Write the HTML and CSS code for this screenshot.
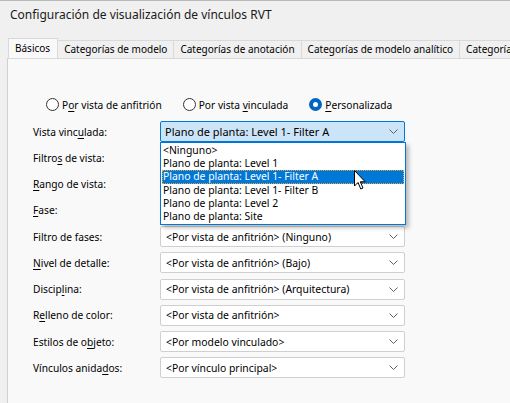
FILE: index.html
```html
<!DOCTYPE html>
<html lang="es">
<head>
<meta charset="utf-8">
<link rel="stylesheet" href="styles.css">
</head>
<body>
<div class="window">
  <div class="topline"></div>
  <div class="titlebar">Configuración de visualización de vínculos RVT</div>
  <div class="tabs">
    <div class="tab active">Básicos</div>
    <div class="tab">Categorías de modelo</div>
    <div class="tab">Categorías de anotación</div>
    <div class="tab">Categorías de modelo analítico</div>
    <div class="tab">Categorías importadas</div>
  </div>
  <div class="panel">
    <div class="radios">
      <label class="radio"><span class="circle"></span><span>P<u>o</u>r vista de anfitrión</span></label>
      <label class="radio"><span class="circle"></span><span>Por vista <u>v</u>inculada</span></label>
      <label class="radio"><span class="circle checked"></span><span><u>P</u>ersonalizada</span></label>
    </div>
    <div class="form">
      <div class="label">Vista vinc<u>u</u>lada:</div>
      <div class="combo focused"><span>Plano de planta: Level 1- Filter A</span><svg class="chev" width="9" height="5" viewBox="0 0 9 5"><path d="M0.5 0.5 L4.5 4.5 L8.5 0.5" fill="none" stroke="#606060" stroke-width="1"/></svg>
        <ul class="list">
          <li>&lt;Ninguno&gt;</li>
          <li>Plano de planta: Level 1</li>
          <li class="sel">Plano de planta: Level 1- Filter A</li>
          <li>Plano de planta: Level 1- Filter B</li>
          <li>Plano de planta: Level 2</li>
          <li>Plano de planta: Site</li>
        </ul>
        <svg class="cursor" width="14" height="21" viewBox="0 0 14 21"><path d="M0.5 0.5 L0.5 16 L4 12.5 L6.8 19 L9 18 L6.3 11.8 L11.2 11.8 Z" fill="#ffffff" stroke="#000" stroke-width="1" stroke-linejoin="round"/></svg>
      </div>

      <div class="label">Filtro<u>s</u> de vista:</div>
      <div class="empty"></div>
      <div class="label"><u>R</u>ango de vista:</div>
      <div class="empty"></div>
      <div class="label"><u>F</u>ase:</div>
      <div class="empty"></div>

      <div class="label">Filtro de fases:</div>
      <div class="combo"><span>&lt;Por vista de anfitrión&gt; (Ninguno)</span><svg class="chev" width="9" height="5" viewBox="0 0 9 5"><path d="M0.5 0.5 L4.5 4.5 L8.5 0.5" fill="none" stroke="#606060" stroke-width="1"/></svg></div>
      <div class="label"><u>N</u>ivel de detalle:</div>
      <div class="combo"><span>&lt;Por vista de anfitrión&gt; (Bajo)</span><svg class="chev" width="9" height="5" viewBox="0 0 9 5"><path d="M0.5 0.5 L4.5 4.5 L8.5 0.5" fill="none" stroke="#606060" stroke-width="1"/></svg></div>
      <div class="label">Discip<u>l</u>ina:</div>
      <div class="combo"><span>&lt;Por vista de anfitrión&gt; (Arquitectura)</span><svg class="chev" width="9" height="5" viewBox="0 0 9 5"><path d="M0.5 0.5 L4.5 4.5 L8.5 0.5" fill="none" stroke="#606060" stroke-width="1"/></svg></div>
      <div class="label">R<u>e</u>lleno de color:</div>
      <div class="combo"><span>&lt;Por vista de anfitrión&gt;</span><svg class="chev" width="9" height="5" viewBox="0 0 9 5"><path d="M0.5 0.5 L4.5 4.5 L8.5 0.5" fill="none" stroke="#606060" stroke-width="1"/></svg></div>
      <div class="label">Estilos de o<u>b</u>jeto:</div>
      <div class="combo"><span>&lt;Por modelo vinculado&gt;</span><svg class="chev" width="9" height="5" viewBox="0 0 9 5"><path d="M0.5 0.5 L4.5 4.5 L8.5 0.5" fill="none" stroke="#606060" stroke-width="1"/></svg></div>
      <div class="label">Vínculos anida<u>d</u>os:</div>
      <div class="combo"><span>&lt;Por vínculo principal&gt;</span><svg class="chev" width="9" height="5" viewBox="0 0 9 5"><path d="M0.5 0.5 L4.5 4.5 L8.5 0.5" fill="none" stroke="#606060" stroke-width="1"/></svg></div>
    </div>
  </div>
</div>
</body>
</html>
```
FILE: styles.css
```css
* { box-sizing: border-box; }
html, body { margin: 0; padding: 0; }
body {
  width: 510px;
  height: 403px;
  overflow: hidden;
  background: #f0f0f0;
  font-family: "Noto Sans", "Open Sans", sans-serif;
  font-size: 10.2px;
  color: #000;
}
.window { position: relative; width: 510px; height: 403px; display: flex; flex-direction: column; overflow: hidden; }
.topline { height: 1px; background: #b9b9b9; }
.titlebar {
  height: 31px;
  padding-left: 10px;
  padding-top: 5px;
  font-size: 12px;
  color: #1a1a1a;
  white-space: nowrap;
}
.tabs {
  display: flex;
  align-items: flex-end;
  height: 26px;
  padding-left: 8px;
  white-space: nowrap;
  overflow: hidden;
}
.tab {
  height: 18px;
  padding: 0 6px;
  line-height: 16px;
  font-size: 10px;
  background: #f0f0f0;
  border: 1px solid #d9d9d9;
  border-bottom: none;
  border-left: none;
  flex-shrink: 0;
}
.tab.active {
  height: 21px;
  line-height: 19px;
  background: #f9f9f9;
  border-left: 1px solid #d9d9d9;
  padding: 0 7px 0 6px;
  margin-bottom: -1px;
  position: relative;
  z-index: 1;
}
.panel {
  flex: 1;
  margin-left: 7px;
  background: #f9f9f9;
  border-left: 1px solid #d0d0d0;
  border-top: 1px solid #d9d9d9;
  padding: 38px 0 0 25px;
}
.radios {
  display: flex;
  gap: 21px;
  padding-left: 13px;
  height: 15px;
  align-items: center;
}
.radio { display: flex; align-items: center; gap: 3px; }
.circle {
  width: 13px; height: 13px;
  border-radius: 50%;
  border: 1px solid #333;
  background: #fff;
}
.circle.checked {
  border: 4px solid #0067c0;
  background: #fff;
}
.form {
  margin-top: 9px;
  display: grid;
  grid-template-columns: 127px 245px;
  grid-auto-rows: 21px;
  row-gap: 5.25px;
  align-items: center;
}
.combo {
  position: relative;
  height: 21px;
  border: 1px solid #cfcfcf;
  border-radius: 2px;
  background: #fff;
  display: flex;
  align-items: center;
  justify-content: space-between;
  padding: 0 6px 0 5px;
  white-space: nowrap;
  font-size: 10.4px;
}
.combo.focused {
  background: #cce4f7;
  border-color: #0078d7;
  padding-left: 4px;
  font-size: 11px;
}
.chev { flex-shrink: 0; }
.list {
  position: absolute;
  left: -1px;
  top: 20px;
  width: 246px;
  margin: 0;
  padding: 1px 1px;
  list-style: none;
  background: #fff;
  border: 1px solid #0078d7;
  box-shadow: 3px 3px 4px rgba(0,0,0,0.25);
  z-index: 5;
  font-size: 10.4px;
}
.list li {
  height: 13.2px;
  line-height: 13px;
  padding-left: 1px;
  white-space: nowrap;
}
.list li.sel {
  background: #0078d7;
  color: #fff;
  outline: 1px dotted #f0a030;
  outline-offset: -1px;
}
.cursor {
  position: absolute;
  left: 193px;
  top: 48px;
  z-index: 6;
}
u { text-decoration-thickness: 1px; text-underline-offset: 2px; }
```
